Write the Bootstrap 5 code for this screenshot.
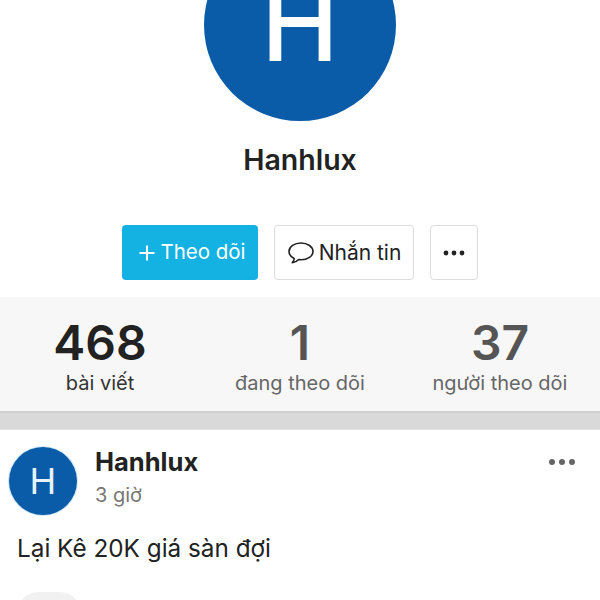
<!DOCTYPE html>
<html lang="vi">
<head>
    <meta charset="UTF-8">
    <meta name="viewport" content="width=device-width, initial-scale=1.0">
    <title>Hanhlux</title>
    <link href="https://cdn.jsdelivr.net/npm/bootstrap@5.3.0/dist/css/bootstrap.min.css" rel="stylesheet">
    <style>
        html, body { height: 600px; overflow: hidden; }
        body { font-family: Inter, "Noto Sans", sans-serif; color: #222; background: #fff; }
        .hero-avatar { width: 192px; height: 192px; margin-top: -71px; background: #0a5ca8; color: #fff; font-size: 104px; line-height: 1; font-weight: 500; }
        .hero-avatar span { margin-bottom: 4px; }
        .hero-name { font-size: 28.5px; line-height: 32px; font-weight: 600; margin-top: 23px; margin-bottom: 49px; }
        .act-btn { height: 55px; font-size: 21px; padding: 0; border-radius: 4px; }
        .act-follow { width: 136px; background: #14b1e3; border: 0; color: #fff; font-size: 20.5px; padding-left: 4px; }
        .act-msg { width: 140px; background: #fff; border: 1px solid #dcdcdc; color: #222; margin-left: 16px; }
        .act-more { width: 48px; background: #fff; border: 1px solid #dcdcdc; color: #222; margin-left: 16px; }
        .stat-bar { background: #f7f7f7; height: 114px; margin-top: 17px; }
        .stat-item { width: 200px; padding-top: 21px; color: #555; }
        .stat-item.active-stat { color: #222; }
        .stat-num { font-size: 48px; line-height: 50px; font-weight: 600; }
        .stat-label { font-size: 20px; line-height: 26px; color: #666; margin-top: 2px; }
        .active-stat .stat-label { color: #333; }
        .sep-band { height: 19px; background: #d9d9d9; border-top: 2px solid #cfcfcf; border-bottom: 1px solid #e4e4e4; }
        .post-head { padding: 17px 0 0 9px; gap: 18px; }
        .post-avatar { width: 68px; height: 68px; background: #0a5ca8; color: #e6f4ff; font-size: 36px; box-shadow: 0 0 0 1px #cfe6f5; }
        .post-name { font-size: 25.5px; line-height: 30px; font-weight: 700; color: #222; }
        .post-time { font-size: 20px; line-height: 26px; color: #777; margin-top: 5px; }
        .post-more { right: 23px; top: 458px; }
        .post-text { font-size: 24.3px; line-height: 30px; margin: 18px 0 0 17px; color: #222; }
        .like-pill { width: 62px; height: 40px; background: #f1f1f1; margin: 29px 0 0 18px; }
    </style>
</head>
<body class="position-relative">
    <div class="d-flex flex-column align-items-center">
        <div class="hero-avatar rounded-circle d-flex align-items-center justify-content-center"><span>H</span></div>
        <div class="hero-name">Hanhlux</div>
        <div class="d-flex">
            <button class="btn act-btn act-follow d-flex align-items-center justify-content-center gap-1">
                <svg width="18" height="18" viewBox="0 0 18 18"><path d="M9 1.500v15M1.500 9h15" stroke="#fff" stroke-width="2"/></svg>
                Theo dõi
            </button>
            <button class="btn act-btn act-msg d-flex align-items-center justify-content-center gap-1">
                <svg width="28" height="26" viewBox="0 0 28 26"><path d="M14 3C7.400 3 2 6.700 2 11.500c0 3 2.100 5.500 5.200 7 0 1.500-.7 3-2 4.300 2.500-.2 4.900-1.300 6.500-3.200.8.100 1.500.2 2.300.2 6.600 0 12-3.600 12-8.300S20.600 3 14 3z" fill="none" stroke="#222" stroke-width="1.600" stroke-linejoin="round"/></svg>
                Nhắn tin
            </button>
            <button class="btn act-btn act-more d-flex align-items-center justify-content-center">
                <svg width="22" height="6" viewBox="0 0 22 6"><circle cx="3" cy="3" r="2.400" fill="#222"/><circle cx="11" cy="3" r="2.400" fill="#222"/><circle cx="19" cy="3" r="2.400" fill="#222"/></svg>
            </button>
        </div>
    </div>

    <div class="stat-bar d-flex text-center">
        <div class="stat-item active-stat"><div class="stat-num">468</div><div class="stat-label">bài viết</div></div>
        <div class="stat-item"><div class="stat-num">1</div><div class="stat-label">đang theo dõi</div></div>
        <div class="stat-item"><div class="stat-num">37</div><div class="stat-label">người theo dõi</div></div>
    </div>
    <div class="sep-band"></div>

    <div class="post-head d-flex">
        <div class="post-avatar rounded-circle d-flex align-items-center justify-content-center">H</div>
        <div>
            <div class="post-name">Hanhlux</div>
            <div class="post-time">3 giờ</div>
        </div>
    </div>
    <div class="post-more position-absolute">
        <svg width="30" height="8" viewBox="0 0 30 8" class="d-block"><circle cx="5" cy="4" r="3" fill="#666"/><circle cx="15" cy="4" r="3" fill="#666"/><circle cx="25" cy="4" r="3" fill="#666"/></svg>
    </div>
    <div class="post-text">Lại Kê 20K giá sàn đợi</div>
    <div class="like-pill rounded-pill"></div>
</body>
</html>
